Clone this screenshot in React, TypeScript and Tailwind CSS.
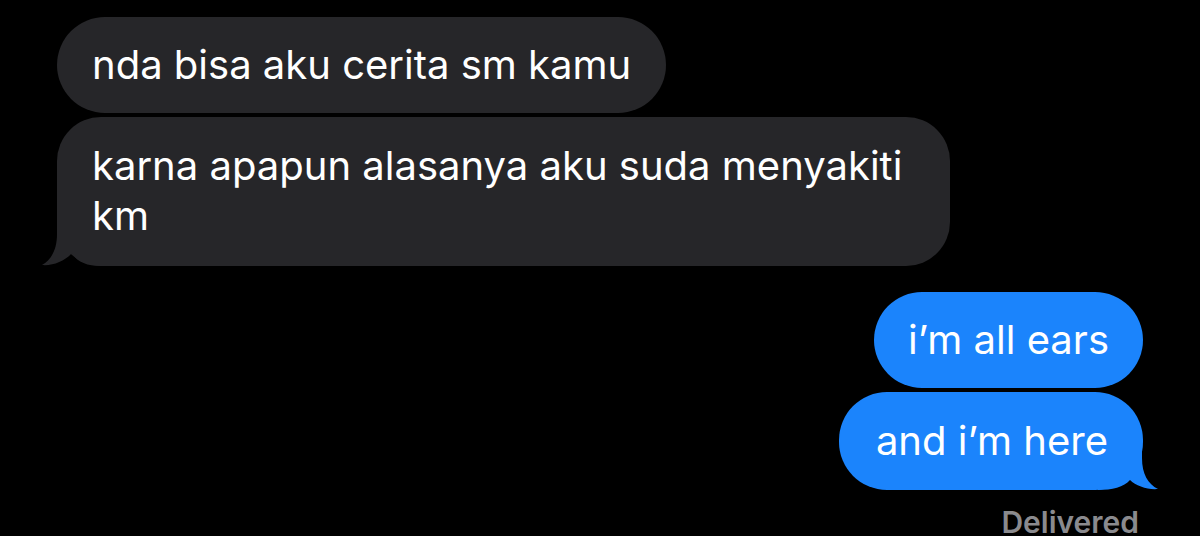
import React from "react";

const font = { fontFamily: "Inter, 'Noto Sans', sans-serif" };

// bubble tails, drawn behind the bubble text
function IncomingTail() {
  return (
    <svg
      className="absolute left-[-16px] bottom-0"
      width="60"
      height="46"
      viewBox="0 0 60 46"
    >
      <path
        d="M16 0 L16 14 C16 30 10 40 1 45 C12 46 24 41 31 33 C36 42 46 46 60 46 L60 0 Z"
        fill="#262629"
      />
    </svg>
  );
}

function OutgoingTail() {
  return (
    <svg
      className="absolute right-[-15px] bottom-0"
      width="60"
      height="46"
      viewBox="0 0 60 46"
    >
      <path
        d="M44 0 L44 14 C44 30 50 40 60 45 C50 46 38 42 32 36 C26 43 14 46 0 46 L0 0 Z"
        fill="#1b84fc"
      />
    </svg>
  );
}

export default function App() {
  return (
    <div
      className="w-[1200px] h-[536px] bg-black overflow-hidden px-[57px] pt-[17px] text-white"
      style={font}
    >
      <div className="flex flex-col items-start gap-1">
        <div className="bg-[#262629] rounded-[48px] px-[35px] py-[23px] text-[40px] leading-[50px]">
          nda bisa aku cerita sm kamu
        </div>
        <div className="relative bg-[#262629] rounded-[44px] pl-[35px] pr-[46px] pt-[24px] pb-[25px] text-[40px] leading-[50px] w-[893px]">
          <IncomingTail />
          <span className="relative">karna apapun alasanya aku suda menyakiti km</span>
        </div>
      </div>

      <div className="flex flex-col items-end gap-1 mt-[26px]">
        <div className="bg-[#1b84fc] rounded-[48px] px-[34px] py-[23px] text-[40px] leading-[50px]">
          i’m all ears
        </div>
        <div className="relative bg-[#1b84fc] rounded-[48px] pl-[37px] pr-[35px] py-[24px] text-[40px] leading-[50px]">
          <OutgoingTail />
          <span className="relative">and i’m here</span>
        </div>
        <div className="mt-[14px] mr-[4px] text-[30px] leading-[28px] font-semibold text-[#8a8a8e]">
          Delivered
        </div>
      </div>
    </div>
  );
}
